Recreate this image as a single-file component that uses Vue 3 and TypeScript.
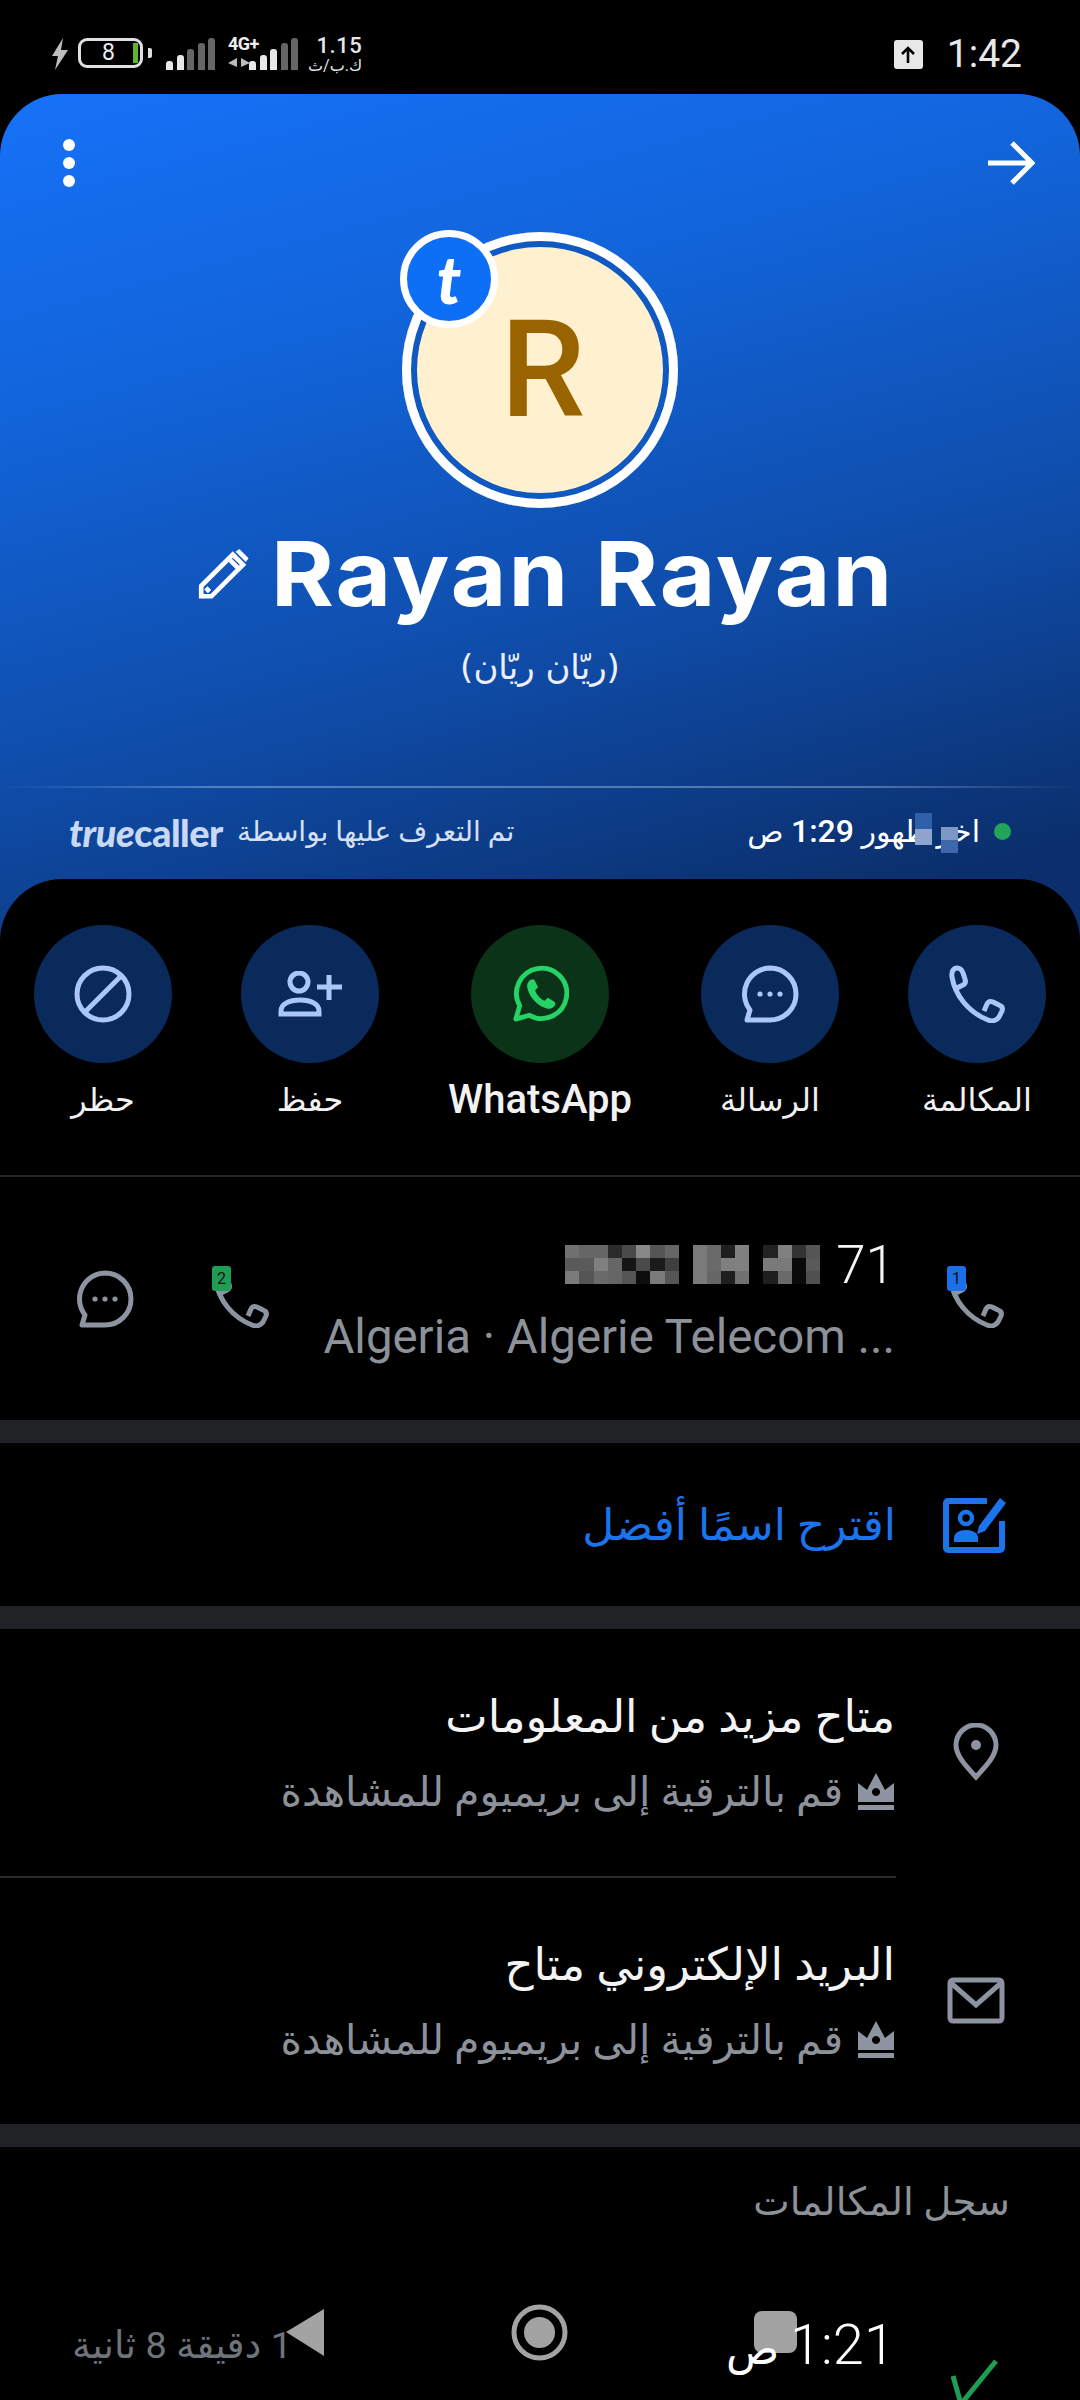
<script setup lang="ts">
interface Action {
  label: string
  icon: "phone" | "chat" | "whatsapp" | "add" | "block"
  green?: boolean
}

const actions: Action[] = [
  { label: "حظر", icon: "block" },
  { label: "حفظ", icon: "add" },
  { label: "WhatsApp", icon: "whatsapp", green: true },
  { label: "الرسالة", icon: "chat" },
  { label: "المكالمة", icon: "phone" },
]

// mosaic over the hidden part of the number
const blurGroups = [
  {
    cols: 8,
    cells: [
      "#707070", "#666", "#666", "#2a2a2a", "#4a4a4a", "#888", "#555", "#666",
      "#5a5a5a", "#5a5a5a", "#808080", "#666", "#151515", "#4a4a4a", "#1a1a1a", "#3f3f3f",
      "#7a7a7a", "#555", "#6a6a6a", "#666", "#555", "#0d0d0d", "#7a7a7a", "#555",
    ],
  },
  {
    cols: 4,
    cells: [
      "#7a7a7a", "#6a6a6a", "#1e1e1e", "#808080",
      "#7a7a7a", "#6a6a6a", "#808080", "#808080",
      "#7a7a7a", "#666", "#1e1e1e", "#707070",
    ],
  },
  {
    cols: 4,
    cells: [
      "#222", "#808080", "#333", "#555",
      "#7a7a7a", "#7a7a7a", "#0a0a0a", "#5a5a5a",
      "#1e1e1e", "#6a6a6a", "#0a0a0a", "#505050",
    ],
  },
]

const signal = [9, 15, 21, 27, 32]
const grey = "#8d93a0"
const handset =
  "M4 12C7 30 20 47 40 55c5 2 9 0 11-3l3-6c1-3 0-5-3-6l-6-3c-3-1-5 0-6 2l-3 7M4 12C3 6 6 3 9 3c3 0 5 2 6 5l2 6c1 3 0 5-2 6l-6 3"
const chatBubble = "M29 3a26 26 0 0 1 0 52H6l3-10A26 26 0 0 1 29 3z"
</script>

<template>
  <div class="screen">
    <div class="status">
      <div class="status-left">
        <svg class="bolt" viewBox="0 0 18 32"><path d="M12 0 1 18h6L4 32l13-20h-7z" fill="#bdbdbd" /></svg>
        <div class="battery"><span class="batt-num">8</span><span class="batt-level"></span></div>
        <span class="batt-tip"></span>
        <div class="bars sim1">
          <span v-for="(h, i) in signal" :key="i" :class="{ dim: i > 1 }" :style="{ height: h + 'px' }"></span>
        </div>
        <div class="sim2">
          <span class="net">4G+</span>
          <svg class="updown" viewBox="0 0 22 9"><path d="M9 0v9L0 5zM13 0l9 5-9 4z" fill="#bbb" /></svg>
          <div class="bars">
            <span v-for="(h, i) in signal" :key="i" :class="{ dim: i > 2 }" :style="{ height: h + 'px' }"></span>
          </div>
        </div>
        <div class="speed"><span class="speed-num">1.15</span><span class="unit">ك.ب/ث</span></div>
      </div>
      <div class="status-right">
        <span class="upload">
          <svg viewBox="0 0 20 24"><path d="M10 21V7M4 12l6-6 6 6" fill="none" stroke="#000" stroke-width="2.6" /></svg>
        </span>
        <span class="clock">1:42</span>
      </div>
    </div>

    <div class="hero">
      <div class="hero-top">
        <div class="dots"><i></i><i></i><i></i></div>
        <svg class="arrow" viewBox="0 0 48 46"><path d="M1 23h43M25 3l20 20-20 20" fill="none" stroke="#fff" stroke-width="5" /></svg>
      </div>
      <div class="avatar-wrap">
        <div class="avatar">R</div>
        <div class="badge">t</div>
      </div>
      <div class="name-row">
        <svg class="pencil" viewBox="0 0 56 56">
          <path d="M4 52V41L38 7l11 11-34 34zM9 43l4 4M34 12l10 10" fill="none" stroke="#fff" stroke-width="5" />
          <path d="M41 4 45 1l10 10-3 4z" fill="#fff" />
        </svg>
        <span class="name">Rayan Rayan</span>
      </div>
      <div class="alt-name">(ريّان ريّان)</div>
      <div class="hero-rule"></div>
      <div class="hero-meta">
        <div class="identified">
          <span class="tc-word"><i>true</i>caller</span>
          <span>تم التعرف عليها بواسطة</span>
        </div>
        <div class="last-seen">
          <span class="seen-text" dir="rtl">اخر ظهور <b>1:29</b> ص<i class="mosaic one"></i><i class="mosaic two"></i></span>
          <span class="online"></span>
        </div>
      </div>
    </div>

    <div class="sheet">
      <div class="actions">
        <div v-for="a in actions" :key="a.icon" class="action">
          <div class="action-circle" :class="{ green: a.green }">
            <svg v-if="a.icon === 'block'" viewBox="0 0 58 58" class="a-icon">
              <circle cx="29" cy="29" r="26" fill="none" stroke="#abc7f8" stroke-width="5" />
              <path d="M11 47 47 11" stroke="#abc7f8" stroke-width="5" />
            </svg>
            <svg v-else-if="a.icon === 'add'" viewBox="0 0 64 46" class="a-icon person">
              <circle cx="21" cy="11" r="9" fill="none" stroke="#abc7f8" stroke-width="5" />
              <path d="M3 43v-3c0-7 8-11 19-11s19 4 19 11v3z" fill="none" stroke="#abc7f8" stroke-width="5" />
              <path d="M51 4v25M39 16h25" stroke="#abc7f8" stroke-width="5" />
            </svg>
            <svg v-else-if="a.icon === 'whatsapp'" viewBox="0 0 60 60" class="a-icon">
              <path d="M5 56l4-14A26 26 0 1 1 19 52z" fill="none" stroke="#25d366" stroke-width="5" stroke-linejoin="round" />
              <path d="M21 15c-3 1-5 5-4 9 2 9 10 18 20 21 4 1 8-1 9-5l-1-2-7-4-3 3c-4-1-9-7-10-11l3-3-4-8z" fill="#25d366" />
            </svg>
            <svg v-else-if="a.icon === 'chat'" viewBox="0 0 58 58" class="a-icon">
              <path :d="chatBubble" fill="none" stroke="#abc7f8" stroke-width="5" stroke-linejoin="round" />
              <circle cx="19" cy="29" r="2.6" fill="#abc7f8" /><circle cx="29" cy="29" r="2.6" fill="#abc7f8" /><circle cx="39" cy="29" r="2.6" fill="#abc7f8" />
            </svg>
            <svg v-else viewBox="0 0 58 58" class="a-icon">
              <path :d="handset" fill="none" stroke="#abc7f8" stroke-width="5" stroke-linejoin="round" />
            </svg>
          </div>
          <span class="action-label" :class="{ latin: a.green }">{{ a.label }}</span>
        </div>
      </div>

      <div class="phone-row">
        <svg viewBox="0 0 58 58" class="row-icon">
          <path :d="chatBubble" fill="none" :stroke="grey" stroke-width="5" stroke-linejoin="round" />
          <circle cx="19" cy="29" r="2.6" :fill="grey" /><circle cx="29" cy="29" r="2.6" :fill="grey" /><circle cx="39" cy="29" r="2.6" :fill="grey" />
        </svg>
        <div class="sim-call second">
          <svg viewBox="0 0 58 58" class="row-icon">
            <path :d="handset" fill="none" :stroke="grey" stroke-width="5" stroke-linejoin="round" />
          </svg>
          <span class="sim-tag two">2</span>
        </div>
        <div class="phone-text">
          <div class="phone-num">
            <div class="pixels">
              <div v-for="(g, gi) in blurGroups" :key="gi" class="pixel-group" :style="{ gridTemplateColumns: `repeat(${g.cols}, 14.2px)` }">
                <span v-for="(c, i) in g.cells" :key="i" :style="{ background: c }"></span>
              </div>
            </div>
            <span>71</span>
          </div>
          <div class="phone-sub">Algeria · Algerie Telecom ...</div>
        </div>
        <div class="sim-call first">
          <svg viewBox="0 0 58 58" class="row-icon">
            <path :d="handset" fill="none" :stroke="grey" stroke-width="5" stroke-linejoin="round" />
          </svg>
          <span class="sim-tag">1</span>
        </div>
      </div>

      <div class="band"></div>

      <div class="suggest-row">
        <span class="suggest-text">اقترح اسمًا أفضل</span>
        <svg viewBox="0 0 64 56" class="suggest-icon">
          <path d="M44 4H5a2 2 0 0 0-2 2v45a2 2 0 0 0 2 2h52a2 2 0 0 0 2-2V24" fill="none" stroke="#1b74ec" stroke-width="6" />
          <circle cx="23" cy="21" r="6" fill="none" stroke="#1b74ec" stroke-width="4.5" />
          <path d="M11 45v-4c0-5 5-8 12-8s12 3 12 8v4z" fill="#1b74ec" />
          <path d="M36 29 57 1l6 5-21 28-8 3z" fill="#1b74ec" />
        </svg>
      </div>

      <div class="band"></div>

      <div class="info-block">
        <div class="info-row">
          <div class="info-text">
            <div class="info-title">متاح مزيد من المعلومات</div>
            <div class="info-sub">
              <span>قم بالترقية إلى بريميوم للمشاهدة</span>
              <svg viewBox="0 0 38 38" class="crown"><path d="M1 10l9 7 9-17 9 17 9-7v19H1zM1 32h36v5H1zM19 15a4 4 0 1 0 .01 0z" :fill="grey" fill-rule="evenodd" /></svg>
            </div>
          </div>
          <div class="info-icon">
            <svg viewBox="0 0 46 58" class="pin">
              <path d="M23 54C11 41 3 32 3 22a20 20 0 0 1 40 0c0 10-8 19-20 32z" fill="none" :stroke="grey" stroke-width="5" />
              <circle cx="23" cy="22" r="5" :fill="grey" />
            </svg>
          </div>
        </div>
        <div class="info-rule"></div>
        <div class="info-row">
          <div class="info-text">
            <div class="info-title">البريد الإلكتروني متاح</div>
            <div class="info-sub">
              <span>قم بالترقية إلى بريميوم للمشاهدة</span>
              <svg viewBox="0 0 38 38" class="crown"><path d="M1 10l9 7 9-17 9 17 9-7v19H1zM1 32h36v5H1zM19 15a4 4 0 1 0 .01 0z" :fill="grey" fill-rule="evenodd" /></svg>
            </div>
          </div>
          <div class="info-icon">
            <svg viewBox="0 0 58 47" class="mail">
              <rect x="3" y="3" width="52" height="41" rx="3" fill="none" :stroke="grey" stroke-width="5" />
              <path d="M4 6l25 22L54 6" fill="none" :stroke="grey" stroke-width="5" />
            </svg>
          </div>
        </div>
      </div>

      <div class="band"></div>

      <div class="log">
        <div class="log-title">سجل المكالمات</div>
        <div class="log-row">
          <span class="log-duration" dir="rtl">1 دقيقة 8 ثانية</span>
          <span class="log-time" dir="rtl"><b>1:21</b> ص</span>
          <svg viewBox="0 0 46 46" class="log-check"><path d="M1 15l8 28L44 0" fill="none" stroke="#1f9d55" stroke-width="5" /></svg>
        </div>
      </div>
    </div>

    <div class="nav">
      <svg viewBox="0 0 38 47" class="nav-back"><path d="M38 0v47L0 23z" fill="#a3a3a3" /></svg>
      <svg viewBox="0 0 57 57" class="nav-home">
        <circle cx="28.5" cy="28.5" r="25.5" fill="none" stroke="#a3a3a3" stroke-width="5" />
        <circle cx="28.5" cy="28.5" r="15.5" fill="#a3a3a3" />
      </svg>
      <span class="nav-recent"></span>
    </div>
  </div>
</template>

<style>
html,
body {
  margin: 0;
  background: #000;
}
</style>

<style scoped>
.screen {
  position: relative;
  width: 1080px;
  height: 2400px;
  overflow: hidden;
  background: #000;
  color: #fff;
  font-family: Roboto, "DejaVu Sans", sans-serif;
}

/* status bar */
.status {
  height: 94px;
  display: flex;
  justify-content: space-between;
  align-items: flex-start;
  padding: 36px 58px 0 51px;
  box-sizing: border-box;
}

.status-left {
  display: flex;
  align-items: flex-start;
  height: 36px;
}

.bolt {
  width: 18px;
  height: 32px;
  margin: 2px 9px 0 0;
}

.battery {
  width: 65px;
  height: 30px;
  margin-top: 2px;
  border: 3px solid #e0e0e0;
  border-radius: 9px;
  box-sizing: border-box;
  display: flex;
  align-items: center;
  justify-content: flex-end;
  position: relative;
  padding-right: 2px;
}

.batt-num {
  position: absolute;
  left: 21px;
  font-size: 23px;
  line-height: 24px;
  color: #eee;
}

.batt-level {
  width: 5px;
  height: 20px;
  background: #5cb82a;
}

.batt-tip {
  width: 4px;
  height: 10px;
  background: #ddd;
  margin: 12px 14px 0 5px;
  border-radius: 0 2px 2px 0;
}

.bars {
  display: flex;
  align-items: flex-end;
  gap: 3.5px;
  height: 34px;
}

.bars span {
  width: 7px;
  background: #e8e8e8;
  border-radius: 3px 3px 0 0;
}

.bars span.dim {
  background: #666;
}

.sim1 {
  margin-right: 13px;
}

.sim2 {
  position: relative;
  padding-left: 21px;
  margin-right: 10px;
}

.net {
  position: absolute;
  left: 0;
  top: -1px;
  font-size: 18px;
  line-height: 18px;
  font-weight: 700;
  color: #eee;
  letter-spacing: -0.5px;
}

.updown {
  position: absolute;
  left: 0;
  top: 22px;
  width: 22px;
  height: 9px;
}

.speed {
  display: flex;
  flex-direction: column;
  align-items: flex-end;
  margin-top: 1px;
  color: #e6e6e6;
}

.speed-num {
  font-size: 22px;
  line-height: 18px;
  font-weight: 500;
  letter-spacing: 0.5px;
}

.unit {
  font-size: 16px;
  line-height: 18px;
  margin-top: 2px;
}

.status-right {
  display: flex;
  align-items: center;
  gap: 24px;
  height: 36px;
}

.upload {
  width: 29px;
  height: 29px;
  background: #e8e8e8;
  border-radius: 3px;
  display: flex;
  align-items: center;
  justify-content: center;
}

.upload svg {
  width: 20px;
  height: 24px;
}

.clock {
  font-size: 39px;
  line-height: 36px;
  color: #e8e8e8;
}

/* hero */
.hero {
  height: 860px;
  border-radius: 62px 62px 0 0;
  background: linear-gradient(165deg, #1672f8 0%, #1263d8 30%, #0f4ba6 62%, #0b2f6c 90%);
  padding-top: 46px;
  box-sizing: border-box;
}

.hero-top {
  display: flex;
  justify-content: space-between;
  align-items: center;
  padding: 0 45px 0 63px;
  height: 46px;
}

.dots {
  display: flex;
  flex-direction: column;
  gap: 6px;
}

.dots i {
  width: 12px;
  height: 12px;
  border-radius: 50%;
  background: #fff;
}

.arrow {
  width: 48px;
  height: 46px;
}

.avatar-wrap {
  position: relative;
  width: 276px;
  height: 276px;
  margin: 46px auto 0;
}

.avatar {
  width: 276px;
  height: 276px;
  border-radius: 50%;
  background: #fff1cf;
  box-shadow: inset 0 0 0 9px #fff, inset 0 0 0 15px #1159c2;
  display: flex;
  align-items: center;
  justify-content: center;
  color: #996400;
  font-size: 135px;
  font-weight: 500;
  padding-left: 6px;
  box-sizing: border-box;
}

.badge {
  position: absolute;
  left: -2px;
  top: -2px;
  width: 98px;
  height: 98px;
  box-sizing: border-box;
  border-radius: 50%;
  background: #0c6ff5;
  border: 7px solid #fff;
  display: flex;
  align-items: center;
  justify-content: center;
  font: italic 900 66px/1 Lato, sans-serif;
  color: #fff;
}

.name-row {
  display: flex;
  justify-content: center;
  align-items: center;
  gap: 40px;
  margin-top: 16px;
  height: 100px;
  padding-right: 8px;
}

.pencil {
  width: 53px;
  height: 52px;
  flex-shrink: 0;
}

.name {
  font: 700 90px/100px Inter, sans-serif;
  letter-spacing: 2px;
  transform: scaleX(1.065);
}

.alt-name {
  text-align: center;
  font-size: 34px;
  line-height: 50px;
  margin-top: 18px;
  color: #eef;
  font-family: "DejaVu Sans", sans-serif;
}

.hero-rule {
  height: 2px;
  margin-top: 94px;
  background: linear-gradient(90deg, transparent, rgba(255, 255, 255, 0.3) 20%, rgba(255, 255, 255, 0.3) 80%, transparent);
}

.hero-meta {
  display: flex;
  justify-content: space-between;
  align-items: center;
  padding: 20px 69px 0;
  font-size: 28px;
  line-height: 46px;
  color: #d5e0f5;
}

.identified {
  display: flex;
  align-items: center;
  gap: 14px;
}

.tc-word {
  font: 900 38px/1 Lato, sans-serif;
  color: #c9d9f4;
  letter-spacing: -0.5px;
}

.last-seen {
  display: flex;
  align-items: center;
  gap: 14px;
  color: #fff;
}

.seen-text {
  position: relative;
  font-size: 30px;
}

.seen-text b {
  font-size: 32px;
  font-weight: 500;
}

.mosaic {
  position: absolute;
  width: 17px;
  height: 32px;
  top: 5px;
  right: 48px;
  background: linear-gradient(#2f5fa6 50%, #8ea4cc 50%);
}

.mosaic.two {
  top: 19px;
  right: 22px;
  height: 26px;
  background: linear-gradient(#7f97c4 50%, #3f68ac 50%);
}

.online {
  width: 17px;
  height: 17px;
  border-radius: 50%;
  background: #22a45a;
  flex-shrink: 0;
}

/* sheet */
.sheet {
  margin-top: -75px;
  position: relative;
  background: #000;
  border-radius: 62px 62px 0 0;
}

.actions {
  display: flex;
  gap: 69px;
  padding: 46px 34px 0;
  height: 298px;
  box-sizing: border-box;
  border-bottom: 2px solid #23252a;
}

.action {
  width: 138px;
  display: flex;
  flex-direction: column;
  align-items: center;
  gap: 14px;
}

.action:nth-child(3) {
  margin: 0 23px;
}

.action-circle {
  width: 138px;
  height: 138px;
  border-radius: 50%;
  background: #0a2a5b;
  display: flex;
  align-items: center;
  justify-content: center;
  flex-shrink: 0;
}

.action-circle.green {
  background: #0a3318;
}

.a-icon {
  width: 58px;
  height: 58px;
}

.a-icon.person {
  width: 64px;
  height: 46px;
}

.action-label {
  font-size: 32px;
  line-height: 46px;
  white-space: nowrap;
  color: #f2f2f2;
}

.action-label.latin {
  font-weight: 500;
  font-size: 40px;
}

.phone-row {
  height: 243px;
  display: flex;
  align-items: center;
  padding: 0 75px 0 76px;
  box-sizing: border-box;
}

.row-icon {
  width: 58px;
  height: 58px;
  display: block;
}

.sim-call {
  position: relative;
  flex-shrink: 0;
}

.sim-call.second {
  margin-left: 78px;
}

.sim-call.first {
  margin-left: 52px;
}

.sim-tag {
  position: absolute;
  left: 0;
  top: -4px;
  width: 19px;
  height: 25px;
  border-radius: 3px;
  background: #1b6fe8;
  color: #111;
  font-size: 16px;
  line-height: 25px;
  text-align: center;
}

.sim-tag.two {
  background: #1f9d55;
}

.phone-text {
  flex: 1;
  text-align: right;
  margin-top: 8px;
  min-width: 0;
}

.phone-num {
  display: flex;
  justify-content: flex-end;
  align-items: center;
  gap: 16px;
  font-size: 53px;
  font-weight: 300;
  line-height: 56px;
  color: #f4f4f4;
}

.pixels {
  display: flex;
  gap: 14px;
}

.pixel-group {
  display: grid;
  grid-auto-rows: 13px;
}

.phone-sub {
  font-size: 47.4px;
  line-height: 64px;
  color: #8d9199;
  margin-top: 12px;
  white-space: nowrap;
}

.band {
  height: 23px;
  background: #212226;
}

.suggest-row {
  height: 163px;
  display: flex;
  justify-content: flex-end;
  align-items: center;
  gap: 47px;
  padding-right: 73px;
}

.suggest-text {
  font-size: 44px;
  color: #1b74ec;
}

.suggest-icon {
  width: 64px;
  height: 56px;
}

.info-row {
  height: 246.5px;
  display: flex;
  justify-content: flex-end;
  align-items: center;
  padding-right: 74px;
}

.info-text {
  width: 800px;
}

.info-title {
  text-align: right;
  font-size: 45px;
  line-height: 64px;
  color: #f4f4f4;
}

.info-sub {
  display: flex;
  justify-content: flex-end;
  align-items: center;
  gap: 14px;
  font-size: 41px;
  line-height: 56px;
  margin-top: 15px;
  color: #8d9199;
}

.crown {
  width: 38px;
  height: 38px;
  flex-shrink: 0;
}

.info-icon {
  width: 60px;
  margin-left: 51px;
  display: flex;
  justify-content: center;
}

.pin {
  width: 46px;
  height: 58px;
}

.mail {
  width: 58px;
  height: 47px;
}

.info-rule {
  width: 896px;
  height: 2px;
  background: #2a2b2e;
}

.log-title {
  text-align: right;
  padding: 27px 70px 0 0;
  font-size: 38.7px;
  line-height: 56px;
  color: #8d9199;
}

.log-row {
  position: relative;
  z-index: 1;
  height: 230px;
  display: flex;
  align-items: center;
  padding: 0 185px 0 72px;
}

.log-duration {
  font-size: 37.7px;
  color: #6f737a;
}

.log-time {
  margin-left: auto;
  font-size: 44px;
  color: #fff;
}

.log-time b {
  font-size: 56px;
  font-weight: 300;
}

.log-check {
  position: absolute;
  right: 82px;
  top: 131px;
  width: 46px;
  height: 46px;
  overflow: visible;
}

/* nav overlay */
.nav {
  position: absolute;
  left: 0;
  right: 0;
  top: 2302px;
  height: 60px;
  display: flex;
  align-items: center;
  padding-left: 286px;
}

.nav-back {
  width: 38px;
  height: 47px;
}

.nav-home {
  width: 57px;
  height: 57px;
  margin-left: 187px;
}

.nav-recent {
  width: 43px;
  height: 42px;
  margin-left: 186px;
  background: #a3a3a3;
  border-radius: 8px;
}
</style>
